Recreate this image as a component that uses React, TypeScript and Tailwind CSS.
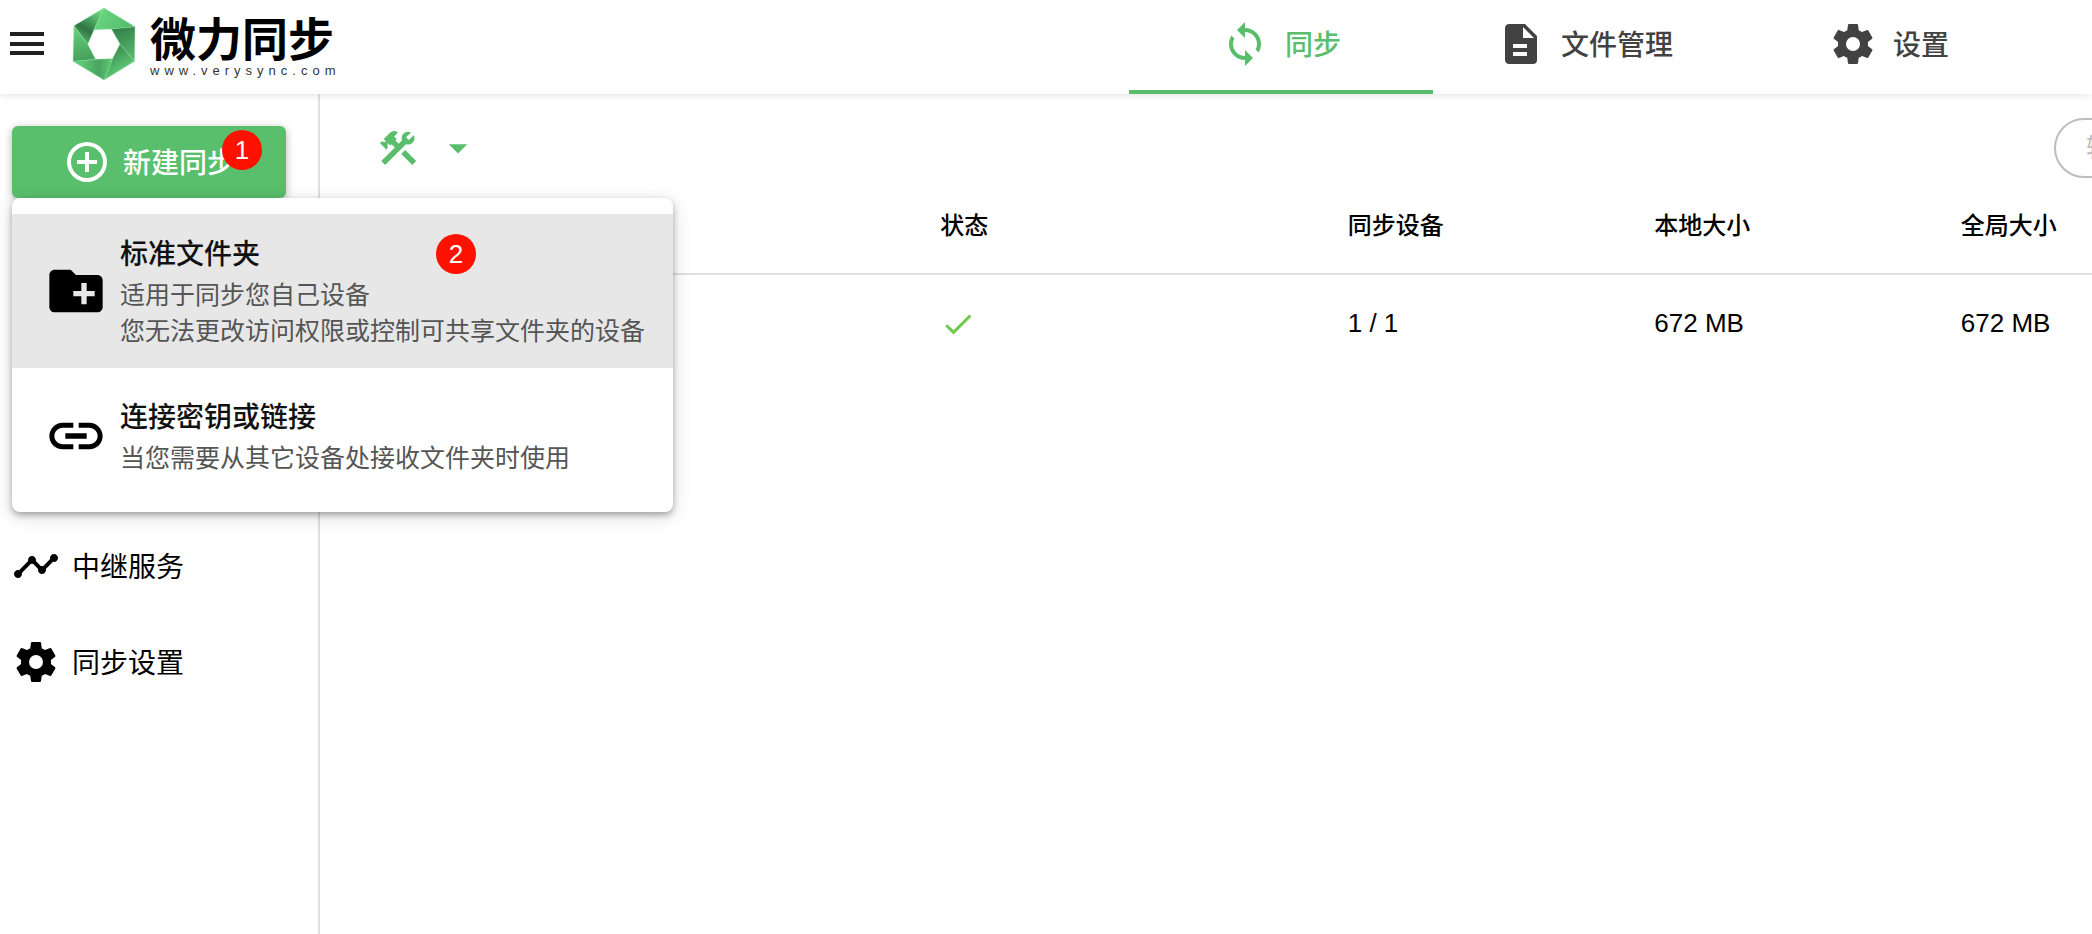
import React from 'react';

const ICONS = {
  SYNC: 'M12 4V1L8 5l4 4V6c3.31 0 6 2.69 6 6 0 1.01-.25 1.97-.7 2.8l1.46 1.46C19.54 15.03 20 13.57 20 12c0-4.42-3.58-8-8-8zm0 14c-3.31 0-6-2.69-6-6 0-1.01.25-1.97.7-2.8L5.24 7.74C4.46 8.97 4 10.43 4 12c0 4.42 3.58 8 8 8v3l4-4-4-4v3z',
  FILE: 'M13 9h5.5L13 3.5V9M6 2h8l6 6v12a2 2 0 0 1-2 2H6c-1.11 0-2-.9-2-2V4c0-1.11.89-2 2-2m9 16v-2H8v2h7m0-4v-2H8v2h7z',
  COG: 'M12 15.5A3.5 3.5 0 0 1 8.5 12 3.5 3.5 0 0 1 12 8.5a3.5 3.5 0 0 1 3.5 3.5 3.5 3.5 0 0 1-3.5 3.5m7.43-2.53c.04-.32.07-.64.07-.97 0-.33-.03-.66-.07-1l2.11-1.63c.19-.15.24-.42.12-.64l-2-3.46c-.12-.22-.39-.31-.61-.22l-2.49 1c-.52-.39-1.06-.73-1.69-.98l-.37-2.65A.506.506 0 0 0 14 2h-4c-.25 0-.46.18-.5.42l-.37 2.65c-.63.25-1.17.59-1.69.98l-2.49-1c-.22-.09-.49 0-.61.22l-2 3.46c-.13.22-.07.49.12.64L4.57 11c-.04.34-.07.67-.07 1 0 .33.03.65.07.97l-2.11 1.66c-.19.15-.25.42-.12.64l2 3.46c.12.22.39.3.61.22l2.49-1.01c.52.4 1.06.74 1.69.99l.37 2.65c.04.24.25.42.5.42h4c.25 0 .46-.18.5-.42l.37-2.65c.63-.26 1.17-.59 1.69-.99l2.49 1.01c.22.08.49 0 .61-.22l2-3.46c.12-.22.07-.49-.12-.64l-2.11-1.66z',
  PLUS: 'M12 20c-4.41 0-8-3.59-8-8s3.59-8 8-8 8 3.59 8 8-3.59 8-8 8m0-18A10 10 0 0 0 2 12a10 10 0 0 0 10 10 10 10 0 0 0 10-10A10 10 0 0 0 12 2m1 5h-2v4H7v2h4v4h2v-4h4v-2h-4V7z',
  FOLDER: 'M20 6h-8l-2-2H4c-1.11 0-1.99.89-1.99 2L2 18c0 1.11.89 2 2 2h16c1.11 0 2-.89 2-2V8c0-1.11-.89-2-2-2zm-1 8h-3v3h-2v-3h-3v-2h3V9h2v3h3v2z',
  LINK: 'M3.9 12c0-1.71 1.39-3.1 3.1-3.1h4V7H7c-2.76 0-5 2.24-5 5s2.24 5 5 5h4v-1.9H7c-1.71 0-3.1-1.39-3.1-3.1zM8 13h8v-2H8v2zm9-6h-4v1.9h4c1.71 0 3.1 1.39 3.1 3.1s-1.39 3.1-3.1 3.1h-4V17h4c2.76 0 5-2.24 5-5s-2.24-5-5-5z',
  TIMELINE: 'M23 8c0 1.1-.9 2-2 2-.18 0-.35-.02-.51-.07l-3.56 3.55c.05.16.07.34.07.52 0 1.1-.9 2-2 2s-2-.9-2-2c0-.18.02-.36.07-.52l-2.55-2.55c-.16.05-.34.07-.52.07s-.36-.02-.52-.07l-4.55 4.56c.05.16.07.33.07.51 0 1.1-.9 2-2 2s-2-.9-2-2 .9-2 2-2c.18 0 .35.02.51.07l4.56-4.55C8.02 9.36 8 9.18 8 9c0-1.1.9-2 2-2s2 .9 2 2c0 .18-.02.36-.07.52l2.55 2.55c.16-.05.34-.07.52-.07s.36.02.52.07l3.55-3.56C19.02 8.35 19 8.18 19 8c0-1.1.9-2 2-2s2 .9 2 2z',
  TOOLS: 'M13.78 15.3l6 6 2.11-2.16-6-6-2.11 2.16M17.5 10.1c-.39 0-.81-.05-1.14-.19L4.97 21.25l-2.11-2.11 7.41-7.4L8.5 9.96l-.72.7-1.45-1.41v2.86l-.7.7-3.52-3.56.7-.7h2.81l-1.4-1.41 3.56-3.56a2.976 2.976 0 0 1 4.22 0L9.89 5.74l1.41 1.4-.71.71 1.79 1.78 1.82-1.88c-.14-.33-.2-.75-.2-1.12a3.49 3.49 0 0 1 3.5-3.52c.59 0 1.11.14 1.58.42L16.41 6.2l1.5 1.5 2.67-2.67c.28.47.42.97.42 1.6 0 1.92-1.55 3.47-3.5 3.47z',
  MENU_DOWN: 'M7 10l5 5 5-5H7z',
  CHECK: 'M21 7L9 19l-5.5-5.5 1.41-1.41L9 16.17 19.59 5.59 21 7z',
};

const Icon: React.FC<{ d: string; className: string }> = ({ d, className }) => (
  <svg xmlns="http://www.w3.org/2000/svg" className={className} viewBox="0 0 24 24" fill="currentColor" aria-hidden="true">
    <path d={d} />
  </svg>
);

const Badge: React.FC<{ value: number; className: string }> = ({ value, className }) => (
  <span className={`absolute flex size-10 items-center justify-center rounded-full bg-[#ff1100] text-[26px] font-normal leading-none text-white ${className}`}>
    {value}
  </span>
);

const Logo: React.FC = () => (
  <a href="#" className="flex items-center gap-3 text-black">
    <svg xmlns="http://www.w3.org/2000/svg" className="h-[72px] w-[64px]" viewBox="0 0 64 72" aria-hidden="true">
      <defs>
        <linearGradient id="fold-a" gradientUnits="userSpaceOnUse" x1="12" y1="32" x2="30" y2="4">
          <stop offset="0" stopColor="#4da562" />
          <stop offset="0.3" stopColor="#2f7442" />
          <stop offset="1" stopColor="#6edb86" />
        </linearGradient>
        <linearGradient id="fold-b" gradientUnits="userSpaceOnUse" x1="28" y1="6" x2="56" y2="22">
          <stop offset="0" stopColor="#66d47e" />
          <stop offset="1" stopColor="#56bb6d" />
        </linearGradient>
        <linearGradient id="fold-c" gradientUnits="userSpaceOnUse" x1="46" y1="20" x2="60" y2="50">
          <stop offset="0" stopColor="#34804a" />
          <stop offset="1" stopColor="#58b96d" />
        </linearGradient>
        <linearGradient id="fold-d" gradientUnits="userSpaceOnUse" x1="42" y1="44" x2="52" y2="60">
          <stop offset="0" stopColor="#3f9354" />
          <stop offset="1" stopColor="#5cc473" />
        </linearGradient>
        <linearGradient id="fold-e" gradientUnits="userSpaceOnUse" x1="10" y1="56" x2="38" y2="58">
          <stop offset="0" stopColor="#5ec775" />
          <stop offset="0.6" stopColor="#4aa460" />
          <stop offset="1" stopColor="#5cc172" />
        </linearGradient>
        <linearGradient id="fold-f" gradientUnits="userSpaceOnUse" x1="4" y1="22" x2="12" y2="52">
          <stop offset="0" stopColor="#62cd7a" />
          <stop offset="1" stopColor="#489f5d" />
        </linearGradient>
      </defs>
      <g stroke="#8be09d" strokeWidth="0.4">
        <path d="M32 0L2 17.7l13.7 18.6L22 21.7z" fill="url(#fold-a)" />
        <path d="M32 0l31 18.7L39.5 21l-17.5.7z" fill="url(#fold-b)" />
        <path d="M63 18.7l-.5 34.6L48 36l-8.5-15z" fill="url(#fold-c)" />
        <path d="M62.5 53.3L32 72l8.5-21.3L48 36z" fill="url(#fold-d)" />
        <path d="M32 72L1 53.3l22.5-2 17-.6z" fill="url(#fold-e)" />
        <path d="M1 53.3l1-35.6 13.7 18.6 7.8 15z" fill="url(#fold-f)" />
      </g>
    </svg>
    <span className="flex flex-col pl-0.5 pt-2">
      <span className="text-[46px] font-bold leading-[46px]">微力同步</span>
      <span className="text-[13px] leading-4 tracking-[5px] text-[#333]">www.verysync.com</span>
    </span>
  </a>
);

const TABS = [
  { label: '同步', icon: ICONS.SYNC, active: true },
  { label: '文件管理', icon: ICONS.FILE, active: false },
  { label: '设置', icon: ICONS.COG, active: false },
];

const MENU_ITEMS = [
  {
    title: '标准文件夹',
    icon: ICONS.FOLDER,
    lines: ['适用于同步您自己设备', '您无法更改访问权限或控制可共享文件夹的设备'],
    active: true,
  },
  {
    title: '连接密钥或链接',
    icon: ICONS.LINK,
    lines: ['当您需要从其它设备处接收文件夹时使用'],
    active: false,
  },
];

const SIDE_LINKS = [
  { label: '中继服务', icon: ICONS.TIMELINE },
  { label: '同步设置', icon: ICONS.COG },
];

const Header: React.FC = () => (
  <header className="relative z-10 flex h-[94px] items-stretch justify-between bg-white pl-2 pr-[51px] shadow-[0_1px_8px_rgba(0,0,0,0.12)]">
    <div className="flex items-center gap-7 pb-1.5">
      <button type="button" aria-label="菜单" className="text-[#212121]">
        <svg xmlns="http://www.w3.org/2000/svg" className="h-6 w-9" viewBox="0 0 36 24" fill="currentColor">
          <path d="M2 0h34v4H2zM2 10h34v4H2zM2 19h34v4H2z" />
        </svg>
      </button>
      <Logo />
    </div>
    <nav className="flex">
      {TABS.map((tab) => (
        <a
          key={tab.label}
          href="#"
          className={`flex w-[304px] items-center justify-center gap-4 border-b-4 pb-0.5 text-[28px] font-medium leading-10 ${
            tab.active ? 'border-[#59bd6b] text-[#59bd6b]' : 'border-transparent text-[#424242]'
          }`}
        >
          <Icon d={tab.icon} className="size-12" />
          <span className="pt-1">{tab.label}</span>
        </a>
      ))}
    </nav>
  </header>
);

const CreateMenu: React.FC = () => (
  <div
    role="menu"
    className="absolute left-0 top-full z-20 w-[661px] rounded-lg bg-white pb-2 pt-4 shadow-[0_3px_6px_rgba(0,0,0,0.3),0_4px_20px_rgba(0,0,0,0.14)]"
  >
    {MENU_ITEMS.map((item) => (
      <button
        key={item.title}
        type="button"
        role="menuitem"
        className={`relative flex min-h-[136px] w-full items-center gap-3 py-[19px] pl-8 text-left ${item.active ? 'bg-[#e7e7e7]' : 'bg-white'}`}
      >
        <Icon d={item.icon} className="size-16 shrink-0 text-black" />
        <span className="flex flex-col whitespace-nowrap">
          <span className="text-[28px] font-medium leading-[44px] text-[#111]">{item.title}</span>
          {item.lines.map((line) => (
            <span key={line} className="text-[25px] leading-9 text-[#555]">{line}</span>
          ))}
        </span>
        {item.active && <Badge value={2} className="left-[424px] top-5" />}
      </button>
    ))}
  </div>
);

const Sidebar: React.FC = () => (
  <aside className="w-80 shrink-0 border-r-2 border-[#e0e0e0] px-3 pt-8">
    <div className="relative">
      <button
        type="button"
        className="relative flex h-[72px] w-[274px] items-center justify-center gap-3 rounded-md bg-[#59bf6c] text-[28px] font-medium text-white shadow-[0_2px_8px_rgba(0,0,0,0.3)]"
      >
        <Icon d={ICONS.PLUS} className="size-12" />
        <span className="pt-1">新建同步</span>
        <Badge value={1} className="left-[210px] top-1" />
      </button>
      <CreateMenu />
    </div>
    <nav className="mt-80 flex flex-col">
      {SIDE_LINKS.map((link) => (
        <a key={link.label} href="#" className="flex h-24 items-center gap-3 text-[28px] text-black">
          <Icon d={link.icon} className="size-12" />
          <span className="pt-1">{link.label}</span>
        </a>
      ))}
    </nav>
  </aside>
);

const FolderTable: React.FC = () => (
  <table className="w-full table-fixed text-left text-black">
    <colgroup>
      <col className="w-[35%]" />
      <col className="w-[23%]" />
      <col className="w-[17.3%]" />
      <col className="w-[17.3%]" />
      <col />
    </colgroup>
    <thead>
      <tr className="h-24 whitespace-nowrap border-b-2 border-[#e0e0e0] text-[24px]">
        <th />
        <th className="font-medium">状态</th>
        <th className="font-medium">同步设备</th>
        <th className="font-medium">本地大小</th>
        <th className="font-medium">全局大小</th>
      </tr>
    </thead>
    <tbody>
      <tr className="h-[98px] whitespace-nowrap text-[26px]">
        <td />
        <td>
          <Icon d={ICONS.CHECK} className="size-9 text-[#6ccb4b]" />
        </td>
        <td>1 / 1</td>
        <td>672 MB</td>
        <td>672 MB</td>
      </tr>
    </tbody>
  </table>
);

const App: React.FC = () => {
  return (
    <div className="flex min-h-screen flex-col overflow-x-hidden bg-white font-['Liberation_Sans','Noto_Sans_CJK_SC',sans-serif]">
      <Header />
      <div className="flex flex-1">
        <Sidebar />
        <main className="min-w-0 flex-1 overflow-hidden">
          <div className="flex h-[84px] items-center justify-between pl-14 pt-6">
            <button type="button" aria-label="工具" className="flex items-center gap-4 text-[#59bd6b]">
              <Icon d={ICONS.TOOLS} className="size-11" />
              <Icon d={ICONS.MENU_DOWN} className="size-11" />
            </button>
            {/* the search field runs past the right edge of the window */}
            <input
              type="text"
              aria-label="搜索"
              placeholder="输入关键字搜索"
              className="-mr-[322px] h-[60px] w-[360px] shrink-0 rounded-full border-2 border-[#bdbdbd] px-[30px] text-[26px] outline-none placeholder:text-[#bdbdbd]"
            />
          </div>
          <FolderTable />
        </main>
      </div>
    </div>
  );
};

export default App;
